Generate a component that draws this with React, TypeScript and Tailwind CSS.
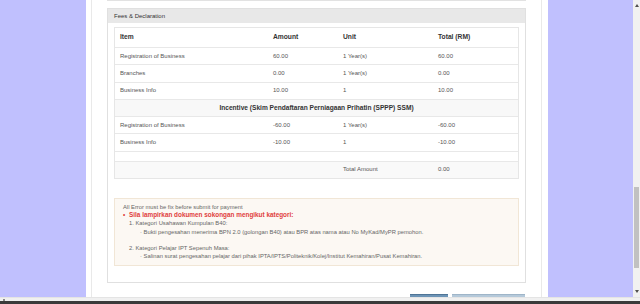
import React from "react";

const font = { fontFamily: '"Liberation Sans", Arial, sans-serif' };

const rows = [
  { item: "Registration of Business", amount: "60.00", unit: "1 Year(s)", total: "60.00" },
  { item: "Branches", amount: "0.00", unit: "1 Year(s)", total: "0.00" },
  { item: "Business Info", amount: "10.00", unit: "1", total: "10.00" },
];

const incentive = [
  { item: "Registration of Business", amount: "-60.00", unit: "1 Year(s)", total: "-60.00" },
  { item: "Business Info", amount: "-10.00", unit: "1", total: "-10.00" },
];

const cols = "grid grid-cols-[153px_70px_95px_1fr]";

const Row = ({ r }: { r: { item: string; amount: string; unit: string; total: string } }) => (
  <div className={`${cols} h-[17.3px] items-center border-t border-[#e8e8e8] text-[#555]`}>
    <span className="pl-[5px]">{r.item}</span>
    <span className="pl-[5px]">{r.amount}</span>
    <span className="pl-[5px]">{r.unit}</span>
    <span className="pl-[5px]">{r.total}</span>
  </div>
);

const FeesTable = () => (
  <div className="border border-[#e6e6e6] bg-white text-[6px]">
    {/* head */}
    <div className={`${cols} h-[19px] items-center font-bold text-[6.7px] text-[#333]`}>
      <span className="pl-[5px]">Item</span>
      <span className="pl-[5px]">Amount</span>
      <span className="pl-[5px]">Unit</span>
      <span className="pl-[5px]">Total (RM)</span>
    </div>
    {rows.map((r, i) => (
      <Row key={i} r={r} />
    ))}
    <div className="h-[17.3px] flex items-center justify-center border-t border-[#e8e8e8] bg-[#f8f8f8] font-bold text-[6.6px] text-[#333]">
      Incentive (Skim Pendaftaran Perniagaan Prihatin (SPPP) SSM)
    </div>
    {incentive.map((r, i) => (
      <Row key={i} r={r} />
    ))}
    <div className="h-[10px] border-t border-[#e8e8e8]" />
    <div className={`${cols} h-[17.3px] items-center border-t border-[#e8e8e8] bg-[#f9f9f9] text-[#555]`}>
      <span />
      <span />
      <span className="pl-[5px]">Total Amount</span>
      <span className="pl-[5px]">0.00</span>
    </div>
  </div>
);

const Notice = () => (
  <div className="mt-[19px] h-[68px] border border-[#f1e6d6] bg-[#fcf8f3] pl-[8px] pt-[4px] text-[5.8px] leading-[8.2px] text-[#666]">
    <div>All Error must be fix before submit for payment</div>
    <div className="flex text-[#e0403c] font-bold text-[6.4px]">
      <span className="w-[6px]">•</span>
      <span>Sila lampirkan dokumen sokongan mengikut kategori:</span>
    </div>
    <div className="pl-[6px]">1. Kategori Usahawan Kumpulan B40:</div>
    <div className="pl-[17px]">· Bukti pengesahan menerima BPN 2.0 (golongan B40) atau BPR atas nama atau No MyKad/MyPR pemohon.</div>
    <div className="h-[8.2px]" />
    <div className="pl-[6px]">2. Kategori Pelajar IPT Sepenuh Masa:</div>
    <div className="pl-[17px]">· Salinan surat pengesahan pelajar dari pihak IPTA/IPTS/Politeknik/Kolej/Institut Kemahiran/Pusat Kemahiran.</div>
  </div>
);

export default function App() {
  return (
    <div className="w-[640px] h-[304px] overflow-hidden flex flex-col bg-white text-[6px]" style={font}>
      <div className="flex h-[297px]">
        <div className="w-[86px] bg-[#c0c0fe]" />
        {/* page body */}
        <div className="w-[462px] pl-[5px] pr-[6px] flex">
          <div className="flex-1 border-x border-[#e9e9e9] px-[15px] flex flex-col">
            <div className="h-[4px] border-x border-b border-[#e2e2e2]" />
            <div className="mt-[7px] border border-[#e0e0e0]">
              <div className="h-[14px] bg-[#e8e8e8] flex items-center pl-[6px] text-[#333]">Fees &amp; Declaration</div>
              <div className="px-[6px] pt-[4px] h-[259px]">
                <FeesTable />
                <Notice />
              </div>
            </div>
            <div className="mt-[11px] flex justify-end gap-[4px] pr-[1px]">
              <div className="w-[38px] h-[6px] bg-[#6d94b6] border-t border-[#4f7596]" />
              <div className="w-[73px] h-[6px] bg-[#b5c9da] border-t border-[#9fb5c8]" />
            </div>
          </div>
        </div>
        <div className="w-[85px] bg-[#c0c0fe]" />
        {/* scrollbar */}
        <div className="w-[7px] bg-[#f1f1f1] flex flex-col items-center">
          <div className="mt-[4px] w-0 h-0 border-x-[2px] border-x-transparent border-b-[3px] border-b-[#505050]" />
          <div className="mt-[180px] w-[5px] h-[81px] bg-[#c1c1c1]" />
          <div className="mt-[22px] w-0 h-0 border-x-[2px] border-x-transparent border-t-[3px] border-t-[#505050]" />
        </div>
      </div>
      <div className="h-[4px] bg-[#f0f0f0] border-t border-[#e4e4e4] flex items-center px-[3px]">
        <div className="w-[2px] h-[2px] bg-[#888]" />
      </div>
      <div className="flex-1 bg-[#3a3a3a]" />
    </div>
  );
}
